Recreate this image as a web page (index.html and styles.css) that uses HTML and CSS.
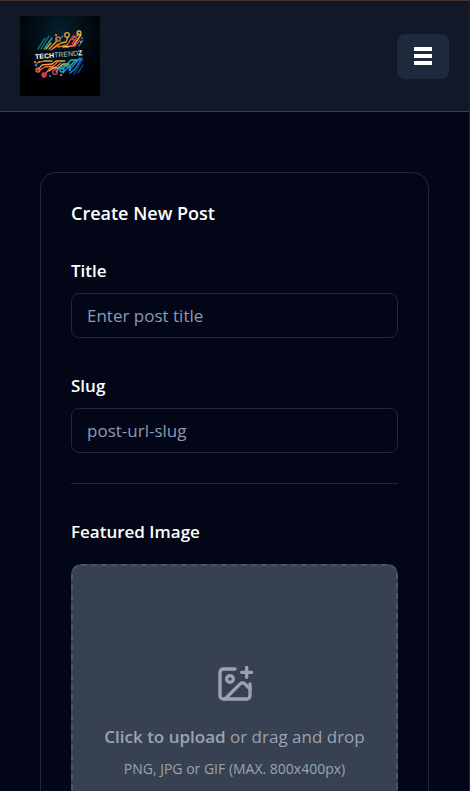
FILE: index.html
```html
<!DOCTYPE html>
<html lang="en">
<head>
<meta charset="utf-8">
<meta name="viewport" content="width=device-width, initial-scale=1">
<title>Create New Post</title>
<link rel="stylesheet" href="styles.css">
</head>
<body>
<header class="topbar">
  <a class="brand" href="#" aria-label="TechTrendz home">
    <svg class="logo" viewBox="0 0 80 80" aria-hidden="true">
      <defs>
        <radialGradient id="glow" cx="50%" cy="20%" r="65%">
          <stop offset="0" stop-color="#06202e"/>
          <stop offset="0.6" stop-color="#020a12"/>
          <stop offset="1" stop-color="#000003"/>
        </radialGradient>
      </defs>
      <rect width="80" height="80" fill="url(#glow)"/>
      <g fill="none" stroke-width="1.3" stroke-linecap="round" stroke-linejoin="round">
        <path stroke="#147f86" d="M18 33l7-11M21 33l8-13"/>
        <path stroke="#35a596" d="M24 33l8-11"/>
        <path stroke="#e5a52d" d="M26 33l5-6M29 33l7-7 1-3M34 32l7-5 5-1 2-5"/>
        <path stroke="#f0702d" d="M31 34l7-6M38 31l9-2 4-6 6-3 2-3"/>
        <path stroke="#f4b83c" d="M43 31l10-1 5-7 3-4M47 31l8-2"/>
        <path stroke="#d93d62" d="M52 28l3-4M50 30h5l5-6"/>
        <path stroke="#1689b4" d="M59 30l4-6M41 22l2-2"/>
        <circle cx="38" cy="23" r="2.2" stroke="#ec7034"/>
        <circle cx="47" cy="19" r="2.3" stroke="#eea52e"/>
        <circle cx="54" cy="22" r="2" stroke="#d83a64"/>
        <circle cx="59" cy="17" r="2" stroke="#f6ae35"/>
        <path stroke="#e8a33a" d="M17 47l7-2h8M18 54l4-5 10-1 4-3h9"/>
        <path stroke="#ef6735" d="M20 54l5-3 8-1 5-4M26 57l4-5 6-1 5-4"/>
        <path stroke="#e7bc3e" d="M29 55l4-3h5l5-4h6"/>
        <path stroke="#1cb8c1" d="M36 56l4-5 6-2 5-5h7M42 53l4-3h4l5-5 6-2"/>
        <path stroke="#2184dd" d="M43 57l4-5 5-1 6-7M49 54l4-4 7-8M50 57l5-4 7-11"/>
        <path stroke="#174f91" d="M54 58l9-15M58 57l5-8"/>
        <circle cx="18" cy="54" r="2" stroke="#ee6340"/>
        <circle cx="24" cy="59" r="2" stroke="#ec3160" fill="#ec3160"/>
        <circle cx="35" cy="56" r="2.3" stroke="#d73e72"/>
        <circle cx="42" cy="54" r="2" stroke="#1ca5d8"/>
      </g>
      <g>
        <circle cx="16" cy="49" r="1.4" fill="#2087c3"/>
        <circle cx="15" cy="46" r="1" fill="#f0a331"/>
        <circle cx="19" cy="46" r="1" fill="#ee7236"/>
        <circle cx="30" cy="60" r="1" fill="#24a0b5"/>
        <circle cx="41" cy="59" r="1" fill="#f2a638"/>
        <circle cx="50" cy="54" r="1" fill="#32b5be"/>
        <circle cx="36" cy="19" r="1" fill="#e6a537"/>
        <circle cx="62" cy="22" r="1" fill="#238fc5"/>
        <circle cx="61" cy="26" r="1" fill="#e99a37"/>
      </g>
      <g transform="rotate(-5 40 39)">
        <rect x="14" y="34" width="49" height="8" fill="#020a12"/>
        <text class="logo-text" x="15" y="41"><tspan class="logo-bold">TECH</tspan><tspan>TREND</tspan><tspan class="logo-bold">Z</tspan></text>
      </g>
    </svg>
  </a>
  <button class="menu" type="button" aria-label="Open menu">
    <svg viewBox="0 0 20 20" width="20" height="20" aria-hidden="true"><path fill="currentColor" d="M1 1h18v4H1zM1 8h18v4H1zM1 15h18v4H1z"/></svg>
  </button>
</header>
<main class="page">
  <form class="card">
    <section class="group">
      <h1 class="heading">Create New Post</h1>
      <div class="field">
        <label class="label" for="title">Title</label>
        <input class="input" id="title" type="text" placeholder="Enter post title">
      </div>
      <div class="field">
        <label class="label" for="slug">Slug</label>
        <input class="input" id="slug" type="text" placeholder="post-url-slug">
      </div>
    </section>
    <section class="media">
      <label class="label" for="image">Featured Image</label>
      <label class="drop" for="image">
        <svg class="drop-icon" viewBox="0 0 24 24" fill="none" stroke="currentColor" stroke-width="2" stroke-linecap="round" stroke-linejoin="round" aria-hidden="true">
          <path d="M21 12v7a2 2 0 0 1-2 2H5a2 2 0 0 1-2-2V5a2 2 0 0 1 2-2h7"/>
          <path d="M16 5h6M19 2v6"/>
          <circle cx="9" cy="9" r="2"/>
          <path d="m21 15-3.086-3.086a2 2 0 0 0-2.828 0L6 21"/>
        </svg>
        <span class="drop-text"><strong>Click to upload</strong> or drag and drop</span>
        <span class="drop-hint">PNG, JPG or GIF (MAX. 800x400px)</span>
        <input class="file" id="image" type="file" accept="image/*">
      </label>
    </section>
  </form>
</main>
</body>
</html>
```
FILE: styles.css
```css
* {
  box-sizing: border-box;
}

body {
  margin: 0;
  border-top: 1px solid #4b302e;
  border-right: 1px solid #2a1c20;
  background: #020617;
  color: #fff;
  font-family: "Segoe UI", "Open Sans", "Noto Sans", sans-serif;
  font-size: 17px;
  line-height: 25px;
}

.topbar {
  display: flex;
  align-items: center;
  justify-content: space-between;
  padding: 15px 20px;
  border-bottom: 1px solid #334155;
  background: #111827;
}

.brand,
.logo {
  display: block;
}

.logo {
  width: 80px;
  height: 80px;
}

.logo-text {
  fill: #b9d9df;
  font-family: "Liberation Sans", sans-serif;
  font-size: 7px;
}

.logo-bold {
  fill: #fff;
  font-weight: 700;
}

.menu {
  display: flex;
  align-items: center;
  justify-content: center;
  width: 52px;
  height: 45px;
  padding: 0;
  border: 0;
  border-radius: 8px;
  background: #1e293b;
  color: #fff;
}

.page {
  padding: 60px 40px;
}

.card {
  padding: 30px;
  border: 1px solid #1e293b;
  border-radius: 16px;
}

.group {
  display: flex;
  flex-direction: column;
  gap: 35px;
  padding-bottom: 30px;
  border-bottom: 1px solid #1e293b;
}

.heading {
  margin: 0;
  font-size: 18px;
  font-weight: 600;
  line-height: 20px;
}

.field {
  display: flex;
  flex-direction: column;
  gap: 10px;
}

.label {
  font-weight: 600;
}

.input {
  width: 100%;
  height: 45px;
  padding: 0 15px;
  border: 1px solid #1e293b;
  border-radius: 8px;
  background: transparent;
  color: #fff;
  font: inherit;
}

.input::placeholder {
  color: #8b9bb1;
  opacity: 1;
}

.media {
  display: flex;
  flex-direction: column;
  gap: 20px;
  padding-top: 35px;
}

.drop {
  display: flex;
  flex-direction: column;
  align-items: center;
  justify-content: center;
  height: 320px;
  padding: 25px 0 30px;
  border: 2px dashed #4b5563;
  border-radius: 10px;
  background: #374151;
  color: #9ca3af;
  cursor: pointer;
}

.drop-icon {
  width: 40px;
  height: 40px;
  margin-bottom: 20px;
}

.drop-text {
  margin-bottom: 10px;
}

.drop-text strong {
  font-weight: 600;
}

.drop-hint {
  font-size: 14px;
  line-height: 20px;
}

.file {
  display: none;
}
```
